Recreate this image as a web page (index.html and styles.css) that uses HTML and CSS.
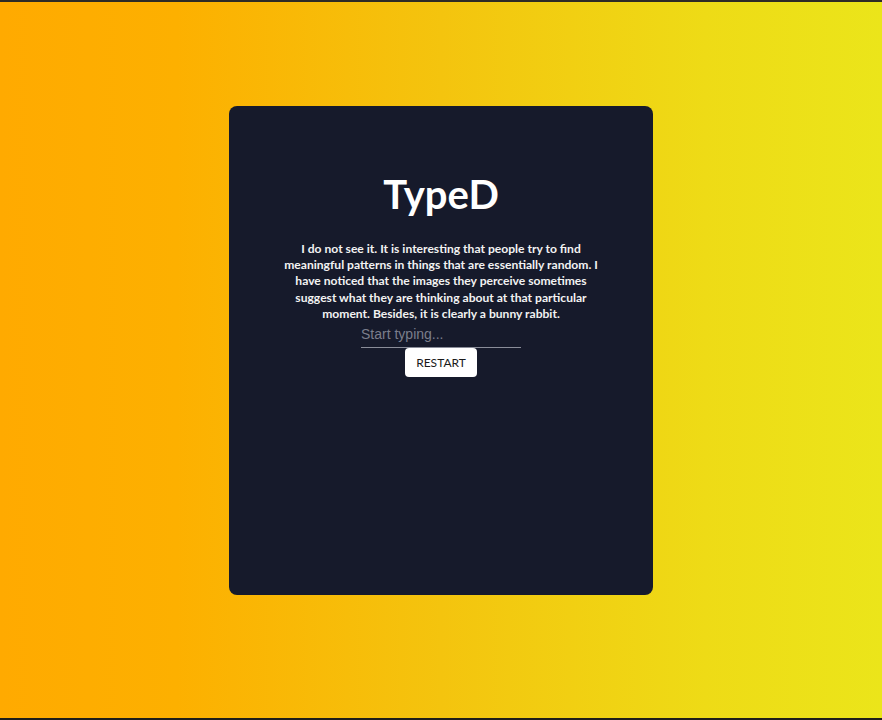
FILE: index.html
```html
<!DOCTYPE html>
<html>
<head>
<meta charset="utf-8">
<link rel="stylesheet" href="styles.css">
</head>
<body>
<div class="page">
  <main class="card">
    <h1 class="title">TypeD</h1>
    <p class="quote">I do not see it. It is interesting that people try to find meaningful patterns in things that are essentially random. I have noticed that the images they perceive sometimes suggest what they are thinking about at that particular moment. Besides, it is clearly a bunny rabbit.</p>
    <input class="typing" type="text" placeholder="Start typing...">
    <button class="restart">RESTART</button>
  </main>
</div>
</body>
</html>
```
FILE: styles.css
```css
html, body {
  margin: 0;
  padding: 0;
}
body {
  height: 720px;
  box-sizing: border-box;
  border-top: 2px solid #2e2b26;
  border-bottom: 2px solid #1e1e1a;
  background: linear-gradient(90deg, #ffaa00 0%, #fdb000 20%, #f4c40e 50%, #eedb16 80%, #ebe51a 100%);
  font-family: Lato, "DejaVu Sans", sans-serif;
}
.page {
  display: flex;
  justify-content: center;
  padding-top: 104px;
}
.card {
  width: 424px;
  height: 489px;
  box-sizing: border-box;
  background: #161a2b;
  border-radius: 8px;
  display: flex;
  flex-direction: column;
  align-items: center;
  padding-top: 66px;
}
.title {
  margin: 0;
  color: #ffffff;
  font-size: 40px;
  font-weight: bold;
  line-height: 44px;
}
.quote {
  margin: 25px 0 0;
  width: 330px;
  color: #f2f2f2;
  font-size: 12.1px;
  font-weight: bold;
  line-height: 16.2px;
  text-align: center;
}
.typing {
  margin-top: 4px;
  width: 160px;
  box-sizing: border-box;
  background: transparent;
  border: none;
  border-bottom: 1px solid #8a8d99;
  color: #ffffff;
  font-family: "Liberation Sans", Arial, sans-serif;
  font-size: 14px;
  padding: 0 0 5px;
  outline: none;
}
.typing::placeholder {
  color: #7b7e8c;
}
.restart {
  width: 72px;
  height: 29px;
  background: #ffffff;
  border: none;
  border-radius: 4px;
  color: #1a1a1a;
  font-family: Lato, "DejaVu Sans", sans-serif;
  font-size: 12px;
  padding: 0;
}
```
